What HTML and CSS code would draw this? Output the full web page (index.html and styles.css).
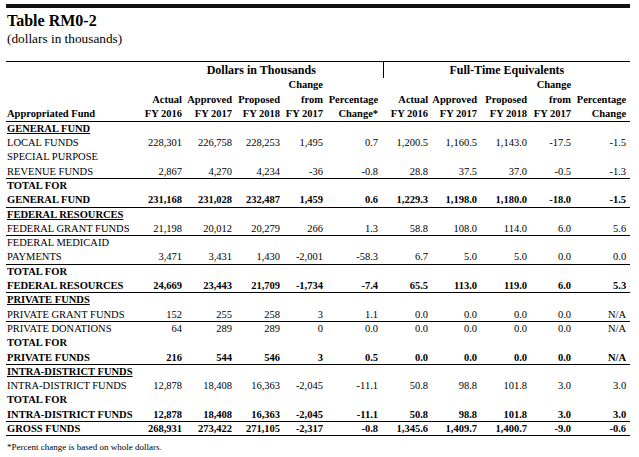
FILE: index.html
```html
<!DOCTYPE html>
<html lang="en">
<head>
<meta charset="utf-8">
<title>Table RM0-2</title>
<link rel="stylesheet" href="styles.css">
</head>
<body>
<div class="page">
  <div class="topbar"></div>
  <h1 class="title">Table RM0-2</h1>
  <p class="subtitle">(dollars in thousands)</p>
  <table class="rm">
    <colgroup>
      <col class="c-label"><col class="c-a"><col class="c-b"><col class="c-c"><col class="c-d"><col class="c-e">
      <col class="c-f"><col class="c-g"><col class="c-h"><col class="c-i"><col class="c-j">
    </colgroup>
    <thead>
      <tr class="grp">
        <th></th>
        <th colspan="5" class="grp-dollars">Dollars in Thousands</th>
        <th colspan="5" class="grp-fte">Full-Time Equivalents</th>
      </tr>
      <tr class="hd">
        <th></th><th></th><th></th><th></th><th>Change</th><th class="pe"></th>
        <th></th><th></th><th></th><th>Change</th><th class="pj"></th>
      </tr>
      <tr class="hd">
        <th></th><th>Actual</th><th>Approved</th><th>Proposed</th><th>from</th><th class="pe">Percentage</th>
        <th>Actual</th><th>Approved</th><th>Proposed</th><th>from</th><th class="pj">Percentage</th>
      </tr>
      <tr class="hd last">
        <th class="lbl">Appropriated Fund</th><th>FY 2016</th><th>FY 2017</th><th>FY 2018</th><th>FY 2017</th><th class="pe">Change*</th>
        <th>FY 2016</th><th>FY 2017</th><th>FY 2018</th><th>FY 2017</th><th class="pj">Change</th>
      </tr>
    </thead>
    <tbody>
      <tr class="sec"><td class="lbl"><u>GENERAL FUND</u></td><td colspan="10"></td></tr>
      <tr><td class="lbl">LOCAL FUNDS</td><td>228,301</td><td>226,758</td><td>228,253</td><td>1,495</td><td class="pe">0.7</td><td>1,200.5</td><td>1,160.5</td><td>1,143.0</td><td>-17.5</td><td class="pj">-1.5</td></tr>
      <tr class="ln"><td class="lbl">SPECIAL PURPOSE<br>REVENUE FUNDS</td><td>2,867</td><td>4,270</td><td>4,234</td><td>-36</td><td class="pe">-0.8</td><td>28.8</td><td>37.5</td><td>37.0</td><td>-0.5</td><td class="pj">-1.3</td></tr>
      <tr class="ln tot"><td class="lbl">TOTAL FOR<br>GENERAL FUND</td><td>231,168</td><td>231,028</td><td>232,487</td><td>1,459</td><td class="pe">0.6</td><td>1,229.3</td><td>1,198.0</td><td>1,180.0</td><td>-18.0</td><td class="pj">-1.5</td></tr>
      <tr class="sec"><td class="lbl"><u>FEDERAL RESOURCES</u></td><td colspan="10"></td></tr>
      <tr class="ln"><td class="lbl">FEDERAL GRANT FUNDS</td><td>21,198</td><td>20,012</td><td>20,279</td><td>266</td><td class="pe">1.3</td><td>58.8</td><td>108.0</td><td>114.0</td><td>6.0</td><td class="pj">5.6</td></tr>
      <tr class="ln"><td class="lbl">FEDERAL MEDICAID<br>PAYMENTS</td><td>3,471</td><td>3,431</td><td>1,430</td><td>-2,001</td><td class="pe">-58.3</td><td>6.7</td><td>5.0</td><td>5.0</td><td>0.0</td><td class="pj">0.0</td></tr>
      <tr class="ln tot"><td class="lbl">TOTAL FOR<br>FEDERAL RESOURCES</td><td>24,669</td><td>23,443</td><td>21,709</td><td>-1,734</td><td class="pe">-7.4</td><td>65.5</td><td>113.0</td><td>119.0</td><td>6.0</td><td class="pj">5.3</td></tr>
      <tr class="sec"><td class="lbl"><u>PRIVATE FUNDS</u></td><td colspan="10"></td></tr>
      <tr class="ln"><td class="lbl">PRIVATE GRANT FUNDS</td><td>152</td><td>255</td><td>258</td><td>3</td><td class="pe">1.1</td><td>0.0</td><td>0.0</td><td>0.0</td><td>0.0</td><td class="pj">N/A</td></tr>
      <tr><td class="lbl">PRIVATE DONATIONS</td><td>64</td><td>289</td><td>289</td><td>0</td><td class="pe">0.0</td><td>0.0</td><td>0.0</td><td>0.0</td><td>0.0</td><td class="pj">N/A</td></tr>
      <tr class="ln tot"><td class="lbl">TOTAL FOR<br>PRIVATE FUNDS</td><td>216</td><td>544</td><td>546</td><td>3</td><td class="pe">0.5</td><td>0.0</td><td>0.0</td><td>0.0</td><td>0.0</td><td class="pj">N/A</td></tr>
      <tr class="sec"><td class="lbl"><u>INTRA-DISTRICT FUNDS</u></td><td colspan="10"></td></tr>
      <tr><td class="lbl">INTRA-DISTRICT FUNDS</td><td>12,878</td><td>18,408</td><td>16,363</td><td>-2,045</td><td class="pe">-11.1</td><td>50.8</td><td>98.8</td><td>101.8</td><td>3.0</td><td class="pj">3.0</td></tr>
      <tr class="ln tot"><td class="lbl">TOTAL FOR<br>INTRA-DISTRICT FUNDS</td><td>12,878</td><td>18,408</td><td>16,363</td><td>-2,045</td><td class="pe">-11.1</td><td>50.8</td><td>98.8</td><td>101.8</td><td>3.0</td><td class="pj">3.0</td></tr>
      <tr class="ln tot"><td class="lbl">GROSS FUNDS</td><td>268,931</td><td>273,422</td><td>271,105</td><td>-2,317</td><td class="pe">-0.8</td><td>1,345.6</td><td>1,409.7</td><td>1,400.7</td><td>-9.0</td><td class="pj">-0.6</td></tr>
    </tbody>
  </table>
  <p class="note">*Percent change is based on whole dollars.</p>
</div>
</body>
</html>
```

FILE: styles.css
```css
html, body {
  margin: 0;
  padding: 0;
  background: #ffffff;
}

body {
  color: #000000;
  font-family: "Liberation Serif", "Times New Roman", serif;
}

.page {
  width: 624px;
  padding: 4px 9px 0 6px;
}

.topbar {
  height: 4px;
  background: #111111;
}

.title {
  margin: 4px 0 0;
  padding-left: 1px;
  font-size: 16px;
  line-height: 18px;
  font-weight: bold;
}

.subtitle {
  margin: 0;
  padding-left: 1px;
  font-size: 13.3px;
  line-height: 17px;
}

.rm {
  margin-top: 14px;
  width: 624px;
  table-layout: fixed;
  border-collapse: collapse;
  border-top: 1px solid #000;
  font-size: 10.5px;
}

.c-label { width: 134px; }
.c-a { width: 42px; }
.c-b { width: 50px; }
.c-c { width: 48px; }
.c-d { width: 43px; }
.c-e { width: 60px; }
.c-f { width: 45px; }
.c-g { width: 49px; }
.c-h { width: 50px; }
.c-i { width: 44px; }
.c-j { width: 59px; }

.rm th,
.rm td {
  padding: 0;
  text-align: right;
  white-space: nowrap;
  vertical-align: bottom;
}

.rm th {
  font-weight: bold;
}

.rm .pe { padding-right: 5px; }
.rm .pj { padding-right: 4px; }

.rm .lbl {
  text-align: left;
  padding-left: 1px;
}

.grp th {
  font-size: 12px;
  line-height: 16px;
  text-align: center;
}

.grp .grp-dollars {
  border-right: 1px solid #000;
  padding-right: 0;
}

.hd th {
  line-height: 14.5px;
}

.hd.last th {
  border-bottom: 1px solid #000;
  line-height: 13.8px;
}

.rm td {
  line-height: 14.29px;
}

.rm tr.ln td {
  background: linear-gradient(#000, #000) left bottom / 100% 1px no-repeat;
}

.rm tr.tot td {
  font-weight: bold;
}

.rm .sec td {
  font-weight: bold;
}

.rm u {
  text-decoration: underline;
  text-underline-offset: 1px;
}

.note {
  margin: 5px 0 0;
  padding-left: 1px;
  font-size: 9px;
  line-height: 12px;
}
```
